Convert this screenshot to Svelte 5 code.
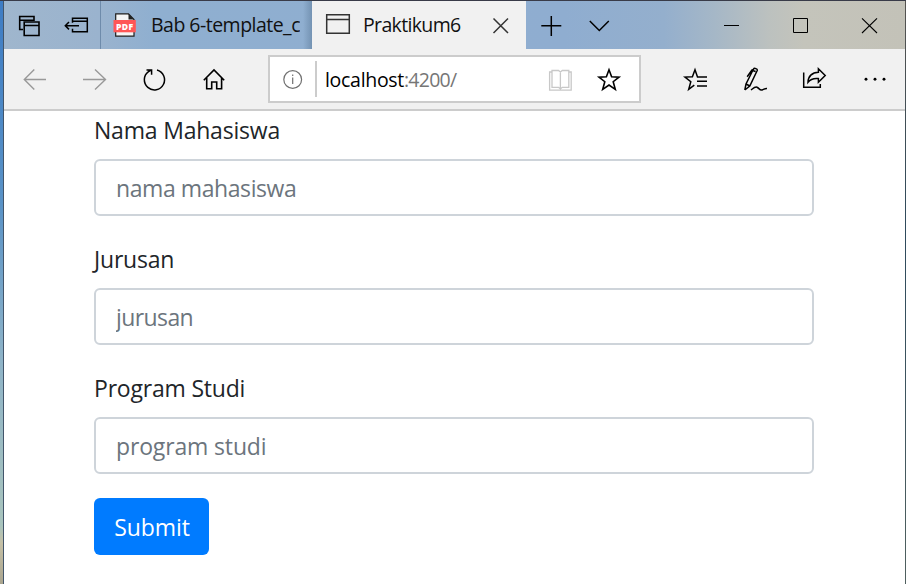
<script>
  const fields = [
    { id: 'nama', label: 'Nama Mahasiswa', hint: 'nama mahasiswa', ls: -0.2, hs: -0.42 },
    { id: 'jurusan', label: 'Jurusan', hint: 'jurusan', ls: -0.2, hs: -0.6 },
    { id: 'prodi', label: 'Program Studi', hint: 'program studi', ls: -0.2, hs: -0.15 }
  ];
</script>

<div class="desktop">
  <div class="window">
    <div class="tabs">
      <svg class="ink" width="48" height="48" viewBox="4 1 48 48"><path d="M23 29.5H19.7V16.5H34V21M19.7 20.3H34M24.2 22H39V35.5H24.2ZM24.2 25.5H39" stroke-width="1.6" /></svg>
      <svg class="ink" width="48" height="48" viewBox="52 1 48 48"><path d="M72.5 22.7V18.3H87.3V31.7H72.5V28.7M72.5 21.2H87.3M79 25.7H65.3M69 22L65.3 25.7L69 29.4" stroke-width="1.5" /></svg>
      <div class="tab old">
        <svg width="38" height="48" viewBox="101 1 38 48">
          <path d="M115.7 13.8H128.5L134 19.5V36.2H115.7Z" fill="#f5f5f5" stroke="#1c1c1c" stroke-width="1.2" />
          <path d="M128.5 13.8V19.5H134Z" fill="#222" />
          <rect x="113.5" y="20" width="22.3" height="12.3" fill="#ff5656" />
          <text x="124.6" y="29.5" text-anchor="middle" textLength="17" fill="#fff" font-size="8.6" font-weight="800">PDF</text>
        </svg>
        <span class="title">Bab 6-template_c</span>
      </div>
      <div class="tab active">
        <svg class="ink" width="51" height="48" viewBox="312 1 51 48"><path d="M326.7 14.7H349.3V33.3H326.7ZM326.7 19.5H349.3" stroke="#333" stroke-width="1.5" /></svg>
        <span class="title">Praktikum6</span>
        <svg class="ink" width="50" height="48" viewBox="476 1 50 48"><path d="M493.5 18.5L508 33M508 18.5L493.5 33" stroke="#333" stroke-width="1.5" /></svg>
      </div>
      <svg class="ink" width="50" height="48" viewBox="526 1 50 48"><path d="M541.3 25.8H561.3M551.3 16V36" stroke-width="1.5" /></svg>
      <svg class="ink" width="50" height="48" viewBox="576 1 50 48"><path d="M589.8 21L599.3 30.5L608.8 21" stroke-width="1.5" /></svg>
      <div class="grow"></div>
      <svg class="ink" width="69" height="48" viewBox="697 1 69 48"><path d="M724 25.5H739" stroke-width="1" /></svg>
      <svg class="ink" width="69" height="48" viewBox="766 1 69 48"><path d="M793.5 18.5H807.5V32.5H793.5Z" stroke-width="1" /></svg>
      <svg class="ink" width="70" height="48" viewBox="835 1 70 48"><path d="M862 18.3L877 33M877 18.3L862 33" stroke-width="1.1" /></svg>
    </div>

    <div class="toolbar">
      <svg class="ink" width="60" height="60" viewBox="4 49 60 60"><path d="M46 79.5H24.3M34.3 69.5L24.3 79.5L34.3 89.5" stroke="#999" stroke-width="1.4" /></svg>
      <svg class="ink" width="60" height="60" viewBox="64 49 60 60"><path d="M83 79.5H105.5M95 69.5L105.5 79.5L95 89.5" stroke="#999" stroke-width="1.4" /></svg>
      <svg class="ink" width="60" height="60" viewBox="124 49 60 60"><path d="M157 70A10.1 10.1 0 1 1 148.5 71.6L151.2 70M146.5 69.9H151.6V74.8" stroke-width="1.5" /></svg>
      <svg class="ink" width="84" height="60" viewBox="184 49 84 60"><path d="M203.8 80.2L214 70L224.2 80.2M206.7 78V88.8H211.7V82H216.7V88.8H221.6V78" stroke-width="1.6" /></svg>
      <div class="address">
        <svg class="ink" width="45" height="44" viewBox="270 57 45 44"><circle cx="292.7" cy="79.5" r="8.9" stroke="#707070" stroke-width="1.2" /><path d="M292.7 77.5V84M292.7 74.5V76" stroke="#707070" stroke-width="1.2" /></svg>
        <div class="rule"></div>
        <span class="url">localhost<i>:4200/</i></span>
        <svg class="ink" width="48" height="44" viewBox="536 57 48 44"><path d="M552 72H549.6V90.2H571.2V72H568.8M552 70.5H558.5L560.4 72L562.3 70.5H568.8V87.3H562.3L560.4 88.8L558.5 87.3H552ZM560.4 72V90" stroke="#c8c8c8" stroke-width="1.3" /></svg>
        <svg class="ink" width="55" height="44" viewBox="584 57 55 44"><path d="M609 69.8L611.6 76.7L619 77.1L613.2 81.7L615.3 89.3L609 85L602.7 89.3L604.8 81.7L599 77.1L606.4 76.7Z" stroke-width="1.6" /></svg>
      </div>
      <div class="grow"></div>
      <svg class="ink" width="60" height="60" viewBox="666 49 60 60"><path d="M707 76.9H697.5L695 69.8L692.4 76.7L685 77.1L690.8 81.7L688.7 89.3L694.3 85.2M697 81.3H707M697 85.9H707" stroke-width="1.5" /></svg>
      <svg class="ink" width="60" height="60" viewBox="726 49 60 60"><path d="M744.8 90L746 84L753.5 69C754.2 67.7 757.8 68.8 757.2 70.5L749.8 86L744.8 90M747.2 76.7L751.8 70.2L755.6 71.5M746 84L749.8 86M751 90C753 88.5 755 86.5 757 87.2C759 88 759.5 90.5 762 90C764 89.7 764.5 88.2 767 88.4" stroke-width="1.5" /></svg>
      <svg class="ink" width="60" height="60" viewBox="786 49 60 60"><path d="M803.7 72.5V87.3H820.3V84M818.4 68.8L825.2 75.5L818.4 82.2V78.6C813 78 810 79.7 808 82.3C808 76.5 812 72.3 818.4 72.2Z" stroke-width="1.5" /></svg>
      <svg width="59" height="60" viewBox="846 49 59 60"><circle cx="866" cy="79.2" r="1.45" /><circle cx="875" cy="79.2" r="1.45" /><circle cx="884" cy="79.2" r="1.45" /></svg>
    </div>

    <form class="page">
      {#each fields as f}
        <div class="group">
          <label for={f.id}><span style="letter-spacing:{f.ls}px">{f.label}</span></label>
          <input id={f.id} placeholder={f.hint} style="letter-spacing:{f.hs}px" />
        </div>
      {/each}
      <button type="button">Submit</button>
    </form>
  </div>
</div>

<style>
  :global(body) { margin: 0; }
  .desktop {
    box-sizing: border-box;
    width: 906px;
    height: 584px;
    padding: 1px 1px 0 3px;
    overflow: hidden;
    font-family: "Open Sans", "Noto Sans", sans-serif;
    background:
      linear-gradient(#2c3347, #45434a) top / 100% 1px no-repeat,
      linear-gradient(#55534f, #2e4a5c 40%, #50605f) right / 1px 100% no-repeat,
      linear-gradient(#3d7cc4, #5a93c7 35%, #8fb4c8 62%, #a9c4bd 90%, #c5c0a6 93%, #aaa58f);
  }
  .window {
    box-sizing: border-box;
    height: 583px;
    border-left: 1px solid #43566b;
    background: #fff;
  }
  svg { display: block; flex: none; }
  .ink { fill: none; stroke: #000; }
  .tabs {
    display: flex;
    height: 48px;
    background: linear-gradient(90deg, #9fb6cd 0, #9ab3ce 95px, #8fafd0 150px, #8fadd0 560px, #94afcd 660px, #a5b7c7 710px, #bcc1bf 765px, #c4c4bb 800px, #c3c2b8);
  }
  .tab { display: flex; box-sizing: border-box; height: 48px; }
  .old {
    width: 212px;
    padding-right: 12px;
    border-left: 1px solid #6e8bab;
    background: linear-gradient(90deg, transparent 202px, #7493b3);
  }
  .old .title { margin-left: 12px; letter-spacing: -0.52px; }
  .active { width: 214px; background: #f1f1f1; }
  .active .title { width: 113px; letter-spacing: -0.65px; }
  .title {
    overflow: hidden;
    font-size: 19.5px;
    line-height: 48px;
    white-space: nowrap;
    color: #111;
  }
  .grow { flex: 1; }
  .toolbar {
    display: flex;
    align-items: center;
    height: 60px;
    border-bottom: 2px solid #ccc;
    background: #f1f1f1;
  }
  .address {
    display: flex;
    align-items: center;
    box-sizing: border-box;
    width: 373px;
    height: 48px;
    border: 2px solid #ccc;
    background: #fff;
  }
  .rule { width: 2px; height: 36px; background: #ccc; }
  .url {
    flex: 1;
    padding: 2px 0 0 8px;
    font-size: 19.5px;
    line-height: 42px;
    letter-spacing: -0.3px;
    white-space: nowrap;
  }
  .url i { font-style: normal; letter-spacing: -0.75px; color: #767676; }
  .page { width: 720px; margin-left: 90px; color: #212529; }
  .group { margin-bottom: 24px; }
  label {
    display: block;
    height: 36px;
    margin-bottom: 12px;
    font-size: 23px;
    line-height: 38px;
    white-space: nowrap;
  }
  input {
    display: block;
    box-sizing: border-box;
    width: 100%;
    height: 57px;
    padding: 0 19px 0 20px;
    border: 2px solid #ced4da;
    border-radius: 6px;
    font: 23px "Open Sans", "Noto Sans", sans-serif;
    background: #fff;
  }
  input::placeholder { color: #6c757d; opacity: 1; }
  button {
    width: 115px;
    height: 57px;
    padding: 0 0 0 1px;
    border: 0;
    border-radius: 6px;
    font: 23px "Open Sans", "Noto Sans", sans-serif;
    letter-spacing: -0.1px;
    color: #fff;
    background: #007bff;
  }
</style>
